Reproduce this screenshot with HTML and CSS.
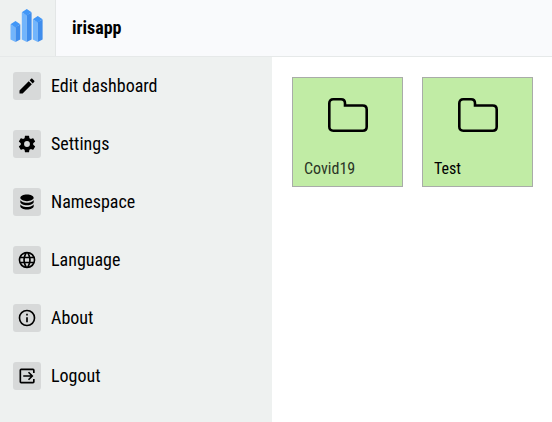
FILE: index.html
```html
<!DOCTYPE html>
<html lang="en">
<head>
<meta charset="utf-8">
<meta name="viewport" content="width=device-width, initial-scale=1">
<title>irisapp</title>
<link rel="stylesheet" href="styles.css">
</head>
<body>
<header class="topbar">
  <a class="logo" href="#" aria-label="Home">
    <svg width="34" height="34" viewBox="0 0 34 34" aria-hidden="true">
      <path fill="#72b5fc" d="M.5 16.500L5.500 19v15L.5 31.500zM11.800 4.500L16.800 7v27l-5-2.500zM22.800 11.500L27.800 14v20l-5-2.500z"/>
      <path fill="#3f8dec" d="M10.300 16.500L5.500 19v15l4.800-2.500zM21.600 4.500L16.800 7v27l4.800-2.500zM32.600 11.500L27.800 14v20l4.800-2.500z"/>
      <path fill="#4297f7" d="M5.500 13l4.800 3.300-4.800 3.200-5-3.200zM16.800 1l4.800 3.300-4.800 3.200-5-3.200zM27.800 8l4.800 3.300-4.800 3.200-5-3.200z"/>
    </svg>
  </a>
  <h1 class="title">irisapp</h1>
</header>
<div class="layout">
  <nav class="sidebar">
    <button class="item" type="button">
      <span class="badge"><svg class="icon" viewBox="0 0 24 24"><path d="M20.710 7.040c.390-.390.390-1.040 0-1.410l-2.340-2.340c-.370-.390-1.020-.390-1.410 0l-1.840 1.830 3.750 3.750M3 17.250V21h3.750L17.810 9.930l-3.750-3.750z"/></svg></span>
      <span>Edit dashboard</span>
    </button>
    <button class="item" type="button">
      <span class="badge"><svg class="icon" viewBox="0 0 24 24"><path d="M12 15.500A3.500 3.500 0 0 1 8.500 12 3.500 3.500 0 0 1 12 8.500a3.500 3.500 0 0 1 3.500 3.500 3.500 3.500 0 0 1-3.500 3.500m7.430-2.530c.040-.320.070-.640.070-.970s-.030-.660-.070-1l2.110-1.630c.190-.150.240-.420.120-.640l-2-3.460c-.120-.220-.390-.310-.610-.220l-2.490 1c-.520-.390-1.060-.730-1.690-.980l-.370-2.650A.506.506 0 0 0 14 2h-4c-.250 0-.460.180-.500.420l-.370 2.650c-.630.250-1.170.590-1.690.980l-2.490-1c-.220-.090-.490 0-.610.220l-2 3.460c-.130.220-.070.490.120.640L4.570 11c-.040.340-.070.670-.070 1s.030.650.070.970l-2.110 1.660c-.190.150-.250.420-.120.640l2 3.460c.120.220.390.300.610.220l2.490-1.010c.520.400 1.060.740 1.690.990l.370 2.650c.040.240.250.420.500.420h4c.250 0 .460-.180.500-.420l.370-2.650c.630-.260 1.170-.590 1.690-.990l2.490 1.010c.220.080.490 0 .610-.220l2-3.460c.120-.220.070-.490-.120-.640z"/></svg></span>
      <span>Settings</span>
    </button>
    <button class="item" type="button">
      <span class="badge"><svg class="icon" viewBox="0 0 24 24"><path d="M12 3C7.580 3 4 4.790 4 7s3.580 4 8 4 8-1.790 8-4-3.580-4-8-4M4 9v3c0 2.210 3.580 4 8 4s8-1.790 8-4V9c0 2.210-3.580 4-8 4s-8-1.790-8-4m0 5v3c0 2.210 3.580 4 8 4s8-1.790 8-4v-3c0 2.210-3.580 4-8 4s-8-1.790-8-4"/></svg></span>
      <span>Namespace</span>
    </button>
    <button class="item" type="button">
      <span class="badge"><svg class="icon" viewBox="0 0 24 24"><path d="M16.360 14c.080-.660.140-1.320.140-2s-.060-1.340-.140-2h3.380c.160.640.260 1.310.260 2s-.100 1.360-.260 2m-5.150 5.560c.600-1.110 1.060-2.310 1.380-3.560h2.950a8.030 8.030 0 0 1-4.330 3.560M14.340 14H9.660c-.100-.660-.160-1.320-.160-2s.060-1.350.160-2h4.680c.090.650.160 1.320.160 2s-.070 1.340-.160 2M12 19.960c-.830-1.200-1.500-2.530-1.910-3.960h3.820c-.410 1.430-1.080 2.760-1.910 3.960M8 8H5.080A7.923 7.923 0 0 1 9.400 4.440C8.800 5.550 8.350 6.750 8 8m-2.920 8H8c.350 1.250.800 2.450 1.400 3.560A8.008 8.008 0 0 1 5.080 16m-.820-2C4.100 13.360 4 12.690 4 12s.100-1.360.260-2h3.380c-.080.660-.140 1.320-.140 2s.060 1.340.140 2M12 4.030c.830 1.200 1.500 2.540 1.910 3.970h-3.820c.410-1.430 1.080-2.770 1.910-3.970M18.920 8h-2.950a15.650 15.650 0 0 0-1.380-3.560c1.840.630 3.370 1.900 4.330 3.560M12 2C6.470 2 2 6.500 2 12a10 10 0 0 0 10 10 10 10 0 0 0 10-10A10 10 0 0 0 12 2"/></svg></span>
      <span>Language</span>
    </button>
    <button class="item" type="button">
      <span class="badge"><svg class="icon" viewBox="0 0 24 24"><path d="M11 9h2V7h-2m1 13c-4.410 0-8-3.590-8-8s3.590-8 8-8 8 3.590 8 8-3.590 8-8 8m0-18A10 10 0 0 0 2 12a10 10 0 0 0 10 10 10 10 0 0 0 10-10A10 10 0 0 0 12 2m-1 15h2v-6h-2z"/></svg></span>
      <span>About</span>
    </button>
    <button class="item" type="button">
      <span class="badge"><svg class="icon line" viewBox="0 0 24 24"><path d="M20.200 8.500V5q0-1-1-1H5Q4 4 4 5v14q0 1 1 1h14.200q1 0 1-1v-3.500M7.500 12H18M13.800 7.500l4.500 4.500-4.500 4.500"/></svg></span>
      <span>Logout</span>
    </button>
  </nav>
  <main class="content">
    <a class="card" href="#">
      <svg class="folder" viewBox="0 0 42 36" aria-hidden="true"><path d="M2.300 6.300q0-4 4-4h7.700q4 0 4 4v2.200h17.700q4 0 4 4v17.200q0 4-4 4H6.300q-4 0-4-4z"/></svg>
      <span class="name muted">Covid19</span>
    </a>
    <a class="card" href="#">
      <svg class="folder" viewBox="0 0 42 36" aria-hidden="true"><path d="M2.300 6.300q0-4 4-4h7.700q4 0 4 4v2.200h17.700q4 0 4 4v17.200q0 4-4 4H6.300q-4 0-4-4z"/></svg>
      <span class="name">Test</span>
    </a>
  </main>
</div>
</body>
</html>
```
FILE: styles.css
```css
* { box-sizing: border-box; }

body {
  margin: 0;
  min-height: 100vh;
  display: flex;
  flex-direction: column;
  background: #fff;
  color: #000;
  font-family: "Roboto Condensed", "Liberation Sans Narrow", Roboto, sans-serif;
  font-size: 18px;
  line-height: 24px;
}

.topbar {
  display: flex;
  background: #f9fafc;
  border-bottom: 1px solid #e6e9e9;
}

.logo {
  display: flex;
  padding: 8px 11px 14px 10px;
  background: #eef1f0;
  border-right: 1px solid #e3e6e6;
}

.title {
  margin: 0;
  padding: 16px;
  font-size: 18px;
  font-weight: 700;
}

.layout {
  display: flex;
  flex: 1;
}

.sidebar {
  flex: 0 0 272px;
  background: #eef1f0;
}

.item {
  display: flex;
  align-items: center;
  gap: 10px;
  width: 100%;
  height: 58px;
  padding: 0 13px;
  border: 0;
  background: none;
  color: inherit;
  font: inherit;
  text-align: left;
}

.badge {
  display: flex;
  padding: 4px;
  border-radius: 3px;
  background: #d7d9d9;
}

.icon {
  width: 20px;
  height: 20px;
}

.line {
  fill: none;
  stroke: #000;
  stroke-width: 2;
}

.content {
  display: flex;
  flex: 1;
  align-items: flex-start;
  flex-wrap: wrap;
  gap: 19px;
  padding: 20px 19px 20px 20px;
}

.card {
  display: flex;
  flex-direction: column;
  justify-content: space-between;
  width: 111px;
  height: 110px;
  padding: 19px 11px 5px;
  border: 1px solid #a9aca9;
  background: #c1eca5;
  color: #000;
  text-decoration: none;
}

.folder {
  width: 42px;
  height: 36px;
  align-self: center;
  fill: none;
  stroke: #000;
  stroke-width: 2.6;
}

.name { font-size: 16px; }

.muted { color: #2b3525; }
```
